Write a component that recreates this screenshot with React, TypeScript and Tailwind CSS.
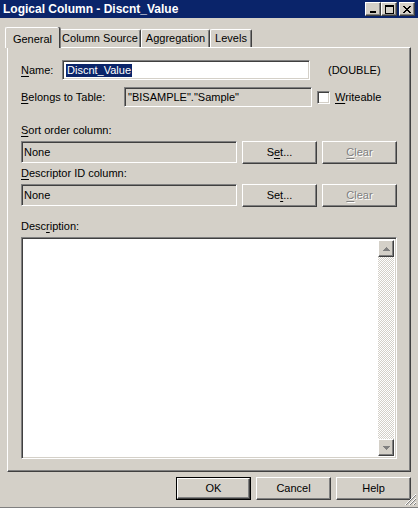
import React from "react";

const raised =
  "border border-t-white border-l-white border-r-[#404040] border-b-[#404040] shadow-[inset_-1px_-1px_#808080]";
const sunken =
  "border border-t-[#808080] border-l-[#808080] border-r-white border-b-white shadow-[inset_1px_1px_#404040,inset_-1px_-1px_#d4d0c8]";
const disabledText = "text-[#808080] [text-shadow:1px_1px_#ffffff]";

function U({ children }: { children: React.ReactNode }) {
  return <span className="underline underline-offset-[2px]">{children}</span>;
}

function TitleButton({ kind }: { kind: "min" | "max" | "close" }) {
  return (
    <div className={`flex h-[14px] w-[16px] items-center justify-center bg-[#d4d0c8] ${raised}`}>
      <svg width="10" height="9" viewBox="0 0 10 9" shapeRendering="crispEdges">
        {kind === "min" && <rect x="2" y="6" width="6" height="2" fill="#000" />}
        {kind === "max" && (
          <>
            <rect x="1" y="0" width="9" height="2" fill="#000" />
            <rect x="1" y="0" width="1" height="9" fill="#000" />
            <rect x="9" y="0" width="1" height="9" fill="#000" />
            <rect x="1" y="8" width="9" height="1" fill="#000" />
          </>
        )}
        {kind === "close" && (
          <path d="M1.5 1 L8.5 8 M8.5 1 L1.5 8" stroke="#000" strokeWidth="1.6" fill="none" />
        )}
      </svg>
    </div>
  );
}

function Btn({ children, disabled, isDefault }: { children: React.ReactNode; disabled?: boolean; isDefault?: boolean }) {
  const inner = (
    <div
      className={`flex h-full w-full items-center justify-center bg-[#d4d0c8] ${raised} ${
        disabled ? disabledText : "text-black"
      }`}
    >
      {children}
    </div>
  );
  if (isDefault) {
    return <div className="h-[23px] w-[75px] border border-black">{inner}</div>;
  }
  return <div className="h-[23px] w-[75px]">{inner}</div>;
}

function Arrow({ up }: { up?: boolean }) {
  return (
    <div className={`flex h-[17px] w-[16px] items-center justify-center bg-[#d4d0c8] ${raised}`}>
      <svg width="7" height="4" viewBox="0 0 7 4" shapeRendering="crispEdges">
        <path d={up ? "M3 0h1v1h1v1h1v1h1v1H0V3h1V2h1V1h1z" : "M0 0h7v1H6v1H5v1H4v1H3V3H2V2H1V1H0z"} fill="#808080" />
      </svg>
    </div>
  );
}

export default function App() {
  return (
    <div
      className="relative flex h-[508px] w-[418px] flex-col border-b border-[#808080] bg-[#d4d0c8] text-[11px] leading-[13px] text-black"
      style={{ fontFamily: '"Liberation Sans", Arial, sans-serif' }}
    >
      {/* Title bar */}
      <div className="flex h-[18px] items-center justify-between bg-[#0a246a] pl-[3px] pr-[3px]">
        <span className="text-[12px] font-bold text-white">Logical Column - Discnt_Value</span>
        <div className="flex items-center">
          <TitleButton kind="min" />
          <TitleButton kind="max" />
          <div className="w-[2px]" />
          <TitleButton kind="close" />
        </div>
      </div>

      {/* Tabs */}
      <div className="mt-[9px] flex h-[20px] items-end pl-[5px]">
        <div className="relative z-10 -mb-px flex h-[21px] w-[54px] items-center justify-center rounded-t-[2px] border-l border-t border-white bg-[#d4d0c8] shadow-[1px_0_#404040,2px_0_#808080] pt-[2px]">
          General
        </div>
        <div className="flex h-[18px] w-[82px] items-center justify-center rounded-t-[2px] border-l border-t border-white border-r-[#404040] border-r shadow-[inset_-1px_0_#808080]">
          Column Source
        </div>
        <div className="flex h-[18px] w-[69px] items-center justify-center rounded-t-[2px] border-l border-t border-white border-r-[#404040] border-r shadow-[inset_-1px_0_#808080]">
          Aggregation
        </div>
        <div className="flex h-[18px] w-[42px] items-center justify-center rounded-t-[2px] border-l border-t border-white border-r-[#404040] border-r shadow-[inset_-1px_0_#808080]">
          Levels
        </div>
      </div>

      {/* Panel */}
      <div
        className={`ml-[7px] flex h-[425px] w-[404px] flex-col border border-t-white border-l-white border-r-[#404040] border-b-[#404040] shadow-[inset_-1px_-1px_#808080] pl-[13px]`}
      >
        {/* Name */}
        <div className="mt-[12px] flex h-[20px] items-center">
          <span className="w-[41px]">
            <U>N</U>ame:
          </span>
          <div className={`flex h-[20px] w-[248px] items-center bg-white pl-[3px] ${sunken}`}>
            <span className="bg-[#0a246a] px-px text-white">Discnt_Value</span>
          </div>
          <span className="ml-[18px]">(DOUBLE)</span>
        </div>

        {/* Belongs to table */}
        <div className="mt-[7px] flex h-[20px] items-center">
          <span className="w-[103px]">
            <U>B</U>elongs to Table:
          </span>
          <div className={`flex h-[20px] w-[188px] items-center pl-[3px] ${sunken}`}>
            "BISAMPLE"."Sample"
          </div>
          <div className={`ml-[5px] h-[13px] w-[13px] bg-white ${sunken}`} />
          <span className="ml-[5px]">
            <U>W</U>riteable
          </span>
        </div>

        {/* Sort order */}
        <div className="mt-[17px] h-[13px]">
          <U>S</U>ort order column:
        </div>
        <div className="mt-[4px] flex h-[22px] items-center">
          <div className={`flex h-[22px] w-[216px] items-center pl-[2px] ${sunken}`}>None</div>
          <div className="ml-[5px]">
            <Btn>
              S<U>e</U>t...
            </Btn>
          </div>
          <div className="ml-[5px]">
            <Btn disabled>
              <U>C</U>lear
            </Btn>
          </div>
        </div>

        {/* Descriptor ID */}
        <div className="mt-[4px] h-[13px]">
          <U>D</U>escriptor ID column:
        </div>
        <div className="mt-[4px] flex h-[22px] items-center">
          <div className={`flex h-[22px] w-[216px] items-center pl-[2px] ${sunken}`}>None</div>
          <div className="ml-[5px]">
            <Btn>
              Se<U>t</U>...
            </Btn>
          </div>
          <div className="ml-[5px]">
            <Btn disabled>
              <U>C</U>lear
            </Btn>
          </div>
        </div>

        {/* Description */}
        <div className="mt-[14px] h-[13px]">
          Desc<U>r</U>iption:
        </div>
        <div className={`mt-[4px] flex h-[222px] w-[376px] justify-end bg-white p-[2px] ${sunken}`}>
          <div className="flex w-[16px] flex-col bg-[repeating-conic-gradient(#d4d0c8_0_25%,#ffffff_0_50%)] bg-[length:2px_2px]">
            <Arrow up />
            <div className="flex-1" />
            <Arrow />
          </div>
        </div>
      </div>

      {/* Bottom buttons */}
      <div className="mt-[5px] flex justify-end gap-[5px] pr-[7px]">
        <Btn isDefault>OK</Btn>
        <Btn>Cancel</Btn>
        <Btn>Help</Btn>
      </div>

      {/* Size grip */}
      <svg
        className="absolute bottom-[1px] right-[1px]"
        width="13"
        height="13"
        viewBox="0 0 13 13"
        shapeRendering="crispEdges"
      >
        {[0, 4, 8].map((o) => (
          <g key={o}>
            <path d={`M${12 - (11 - o)} 12 L12 ${12 - (11 - o)}`} stroke="#ffffff" strokeWidth="1" />
            <path d={`M${13 - (11 - o)} 12 L12 ${13 - (11 - o)}`} stroke="#808080" strokeWidth="1.4" />
          </g>
        ))}
      </svg>
    </div>
  );
}
